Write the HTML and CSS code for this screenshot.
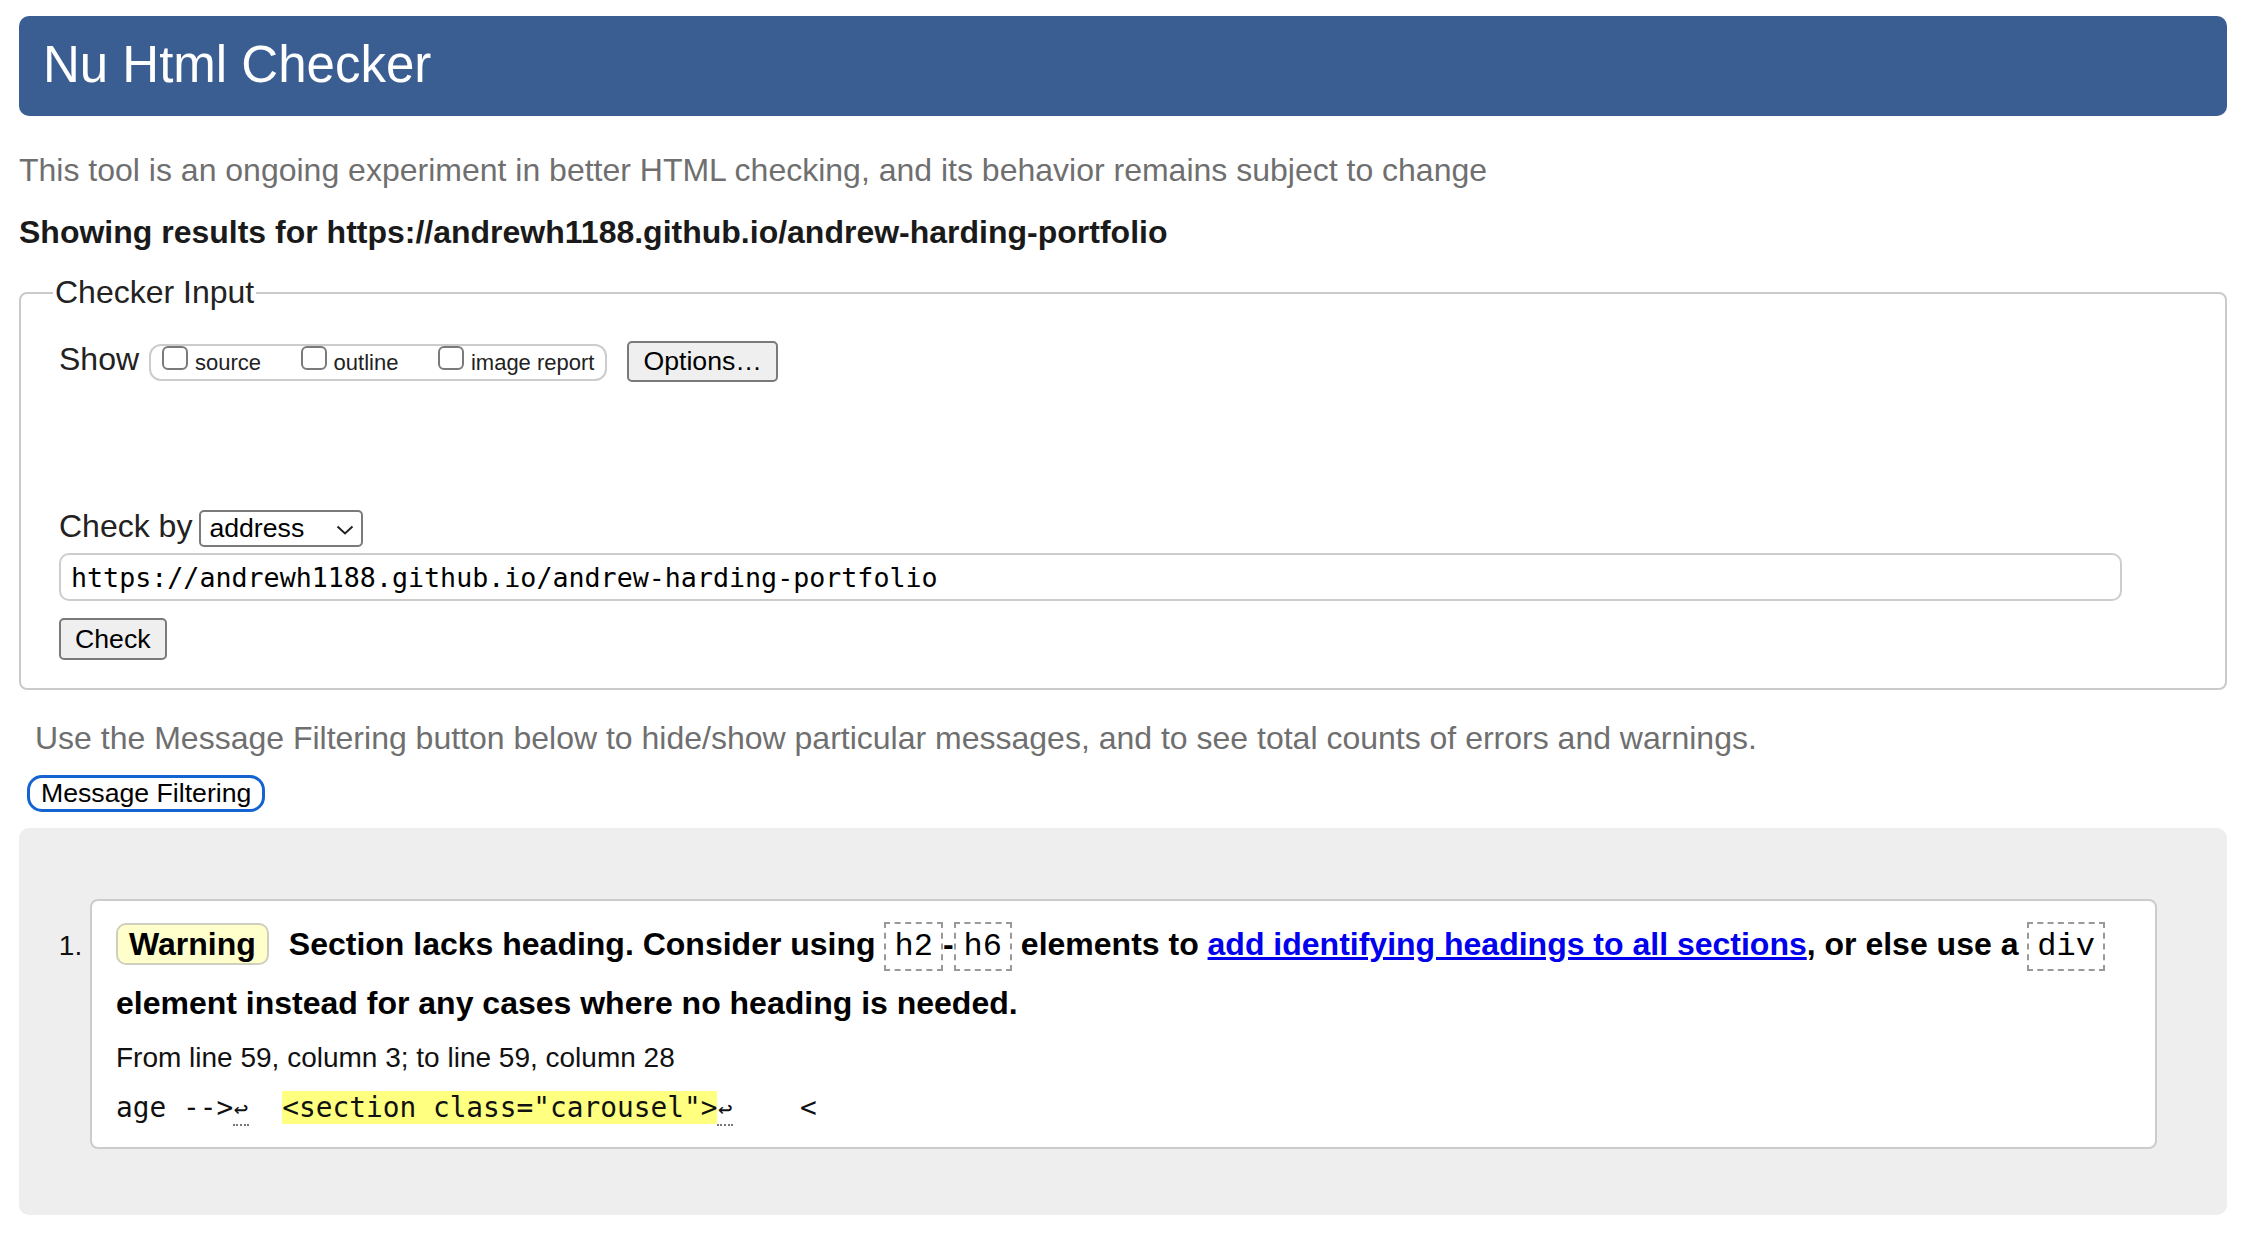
FILE: index.html
```html
<!DOCTYPE html>
<html lang="en">
<head>
<meta charset="utf-8">
<title>Nu Html Checker</title>
<link rel="stylesheet" href="styles.css">
</head>
<body>
<h1 class="masthead">Nu Html Checker</h1>
<p class="intro">This tool is an ongoing experiment in better HTML checking, and its behavior remains subject to change</p>
<p class="showing">Showing results for https://andrewh1188.github.io/andrew-harding-portfolio</p>
<form class="checker-form">
  <fieldset class="checker">
    <legend class="checker-legend">Checker Input</legend>
    <div class="show-row"><span class="show-label">Show</span><span class="show-group"><label class="opt"><input type="checkbox" class="cb"><span class="opt-text">source</span></label><label class="opt"><input type="checkbox" class="cb"><span class="opt-text">outline</span></label><label class="opt"><input type="checkbox" class="cb"><span class="opt-text">image report</span></label></span><button type="button" class="btn btn-options">Options…</button></div>
    <div class="checkby-row"><label class="checkby-label">Check by</label><span class="select"><span class="select-text">address</span><svg class="chev" width="18" height="10" viewBox="0 0 18 10"><path d="M1.5 1.5 L9 8.5 L16.5 1.5" fill="none" stroke="#222" stroke-width="2"/></svg></span></div>
    <input class="url" type="text" value="https://andrewh1188.github.io/andrew-harding-portfolio">
    <button type="button" class="btn btn-check">Check</button>
  </fieldset>
</form>
<p class="filter-note">Use the Message Filtering button below to hide/show particular messages, and to see total counts of errors and warnings.</p>
<button type="button" class="btn-filter">Message Filtering</button>
<div class="results">
  <ol class="messages">
    <li class="msg">
      <p class="msg-text"><span class="badge">Warning</span>Section lacks heading. Consider using <code class="tag">h2</code>-<code class="tag">h6</code> elements to <a href="#" class="msg-link">add identifying headings to all sections</a>, or else use a <code class="tag">div</code> element instead for any cases where no heading is needed.</p>
      <p class="location">From line 59, column 3; to line 59, column 28</p>
      <p class="extract">age --&gt;<b class="lf">↩</b>  <mark class="hl">&lt;section class="carousel"&gt;</mark><b class="lf">↩</b>    &lt;</p>
    </li>
  </ol>
</div>
</body>
</html>
```

FILE: styles.css
```css
html, body {
  background: #ffffff;
}
body {
  margin: 0 21px 0 19px;
  padding-top: 16px;
  font-family: "Liberation Sans", Arial, sans-serif;
  color: #222;
}
.masthead {
  margin: 0;
  background: #3a5e92;
  color: #ffffff;
  border-radius: 10px;
  font-weight: normal;
  font-size: 51px;
  line-height: 59px;
  padding: 19px 20px 22px 24px;
}
.intro {
  margin: 36px 0 0;
  font-size: 32px;
  line-height: 37px;
  color: #6f6f6f;
}
.showing {
  margin: 25px 0 0;
  font-size: 32px;
  line-height: 37px;
  font-weight: bold;
  color: #1a1a1a;
}
.checker-form {
  margin: 23px 0 0;
}
.checker {
  margin: 0;
  border: 2px solid #cacaca;
  border-radius: 8px;
  padding: 30px 20px 28px 38px;
  min-width: 0;
}
.checker-legend {
  font-size: 32px;
  line-height: 37px;
  padding: 0 2px;
  margin-left: -6px;
  color: #222;
}
.show-row {
  font-size: 32px;
  line-height: normal;
}
.show-label {
  color: #222;
}
.show-group {
  display: inline-block;
  margin-left: 10px;
  border: 2px solid #cccccc;
  border-radius: 12px;
  padding: 0 11px;
  font-size: 22px;
  line-height: 33px;
  height: 33px;
}
.opt + .opt {
  margin-left: 39.5px;
}
.cb {
  -webkit-appearance: none;
  appearance: none;
  box-sizing: border-box;
  width: 26px;
  height: 24px;
  margin: 0 7px 0 0;
  border: 2px solid #7a7a7a;
  border-radius: 6px;
  background: #fff;
  vertical-align: top;
}
.opt-text {
  color: #222;
}
.btn {
  font-family: "Liberation Sans", Arial, sans-serif;
  font-size: 26.67px;
  color: #000;
  background: #efefef;
  border: 2px solid #7a7a7a;
  border-radius: 5px;
  box-sizing: border-box;
  padding: 0 14px;
}
.btn-options {
  height: 41px;
  margin-left: 20px;
  vertical-align: baseline;
}
.checkby-row {
  margin-top: 126px;
  font-size: 32px;
  line-height: normal;
}
.select {
  display: inline-flex;
  align-items: center;
  justify-content: space-between;
  box-sizing: border-box;
  width: 164px;
  height: 37px;
  margin-left: 7px;
  padding: 0 7px 0 8px;
  border: 2px solid #7a7a7a;
  border-radius: 5px;
  font-size: 26.67px;
  color: #000;
  vertical-align: baseline;
}
.chev {
  display: block;
  margin-top: 2px;
}
.url {
  display: block;
  box-sizing: border-box;
  width: 2063px;
  height: 48px;
  margin: 6px 0 0;
  padding: 0 10px;
  border: 2px solid #cdcdcd;
  border-radius: 10px;
  font-family: "DejaVu Sans Mono", Menlo, monospace;
  font-size: 26.67px;
  color: #000;
  background: #fff;
}
.btn-check {
  display: block;
  height: 42px;
  margin-top: 17px;
}
.filter-note {
  margin: 30px 0 0 16px;
  font-size: 32px;
  line-height: 37px;
  color: #6f6f6f;
}
.btn-filter {
  display: block;
  margin: 18px 0 0 8px;
  box-sizing: border-box;
  height: 37px;
  padding: 0 11px;
  border: 3px solid #1463d0;
  border-radius: 15px;
  background: #fff;
  font-family: "Liberation Sans", Arial, sans-serif;
  font-size: 26.67px;
  color: #000;
}
.results {
  margin-top: 16px;
  background: #eeeeee;
  border-radius: 10px;
  padding: 71px 70px 66px 71px;
}
.messages {
  margin: 0;
  padding: 0;
  list-style: decimal outside;
}
.msg {
  font-size: 28px;
  color: #111;
  background: #ffffff;
  border: 2px solid #cccccc;
  border-radius: 8px;
  padding: 15px 24px 20px 24px;
}
.msg-text {
  margin: 0;
  font-size: 32px;
  line-height: 57px;
  font-weight: bold;
  color: #000;
}
.badge {
  display: inline-block;
  background: #ffffcc;
  border: 2px solid #cfcfbf;
  border-radius: 10px;
  padding: 0 11px;
  line-height: 38px;
  margin-right: 20px;
}
.tag {
  font-family: "Liberation Mono", "Courier New", monospace;
  font-weight: normal;
  font-size: 32px;
  padding: 4px 8px;
  border: 2px dashed #999999;
  color: #000;
}
.msg-link {
  color: #0000ee;
  text-decoration: underline;
}
.location {
  margin: 8px 0 0;
  line-height: 36px;
  color: #111;
}
.extract {
  margin: 14px 0 0;
  white-space: pre;
  font-family: "DejaVu Sans Mono", Menlo, monospace;
  font-size: 27.8px;
  line-height: 36px;
  color: #111;
}
.hl {
  background: #ffff80;
  color: #111;
}
.lf {
  font-weight: normal;
  font-size: 24px;
  padding: 0 0.6px 1px;
  border-bottom: 2px dotted #777;
}
```
